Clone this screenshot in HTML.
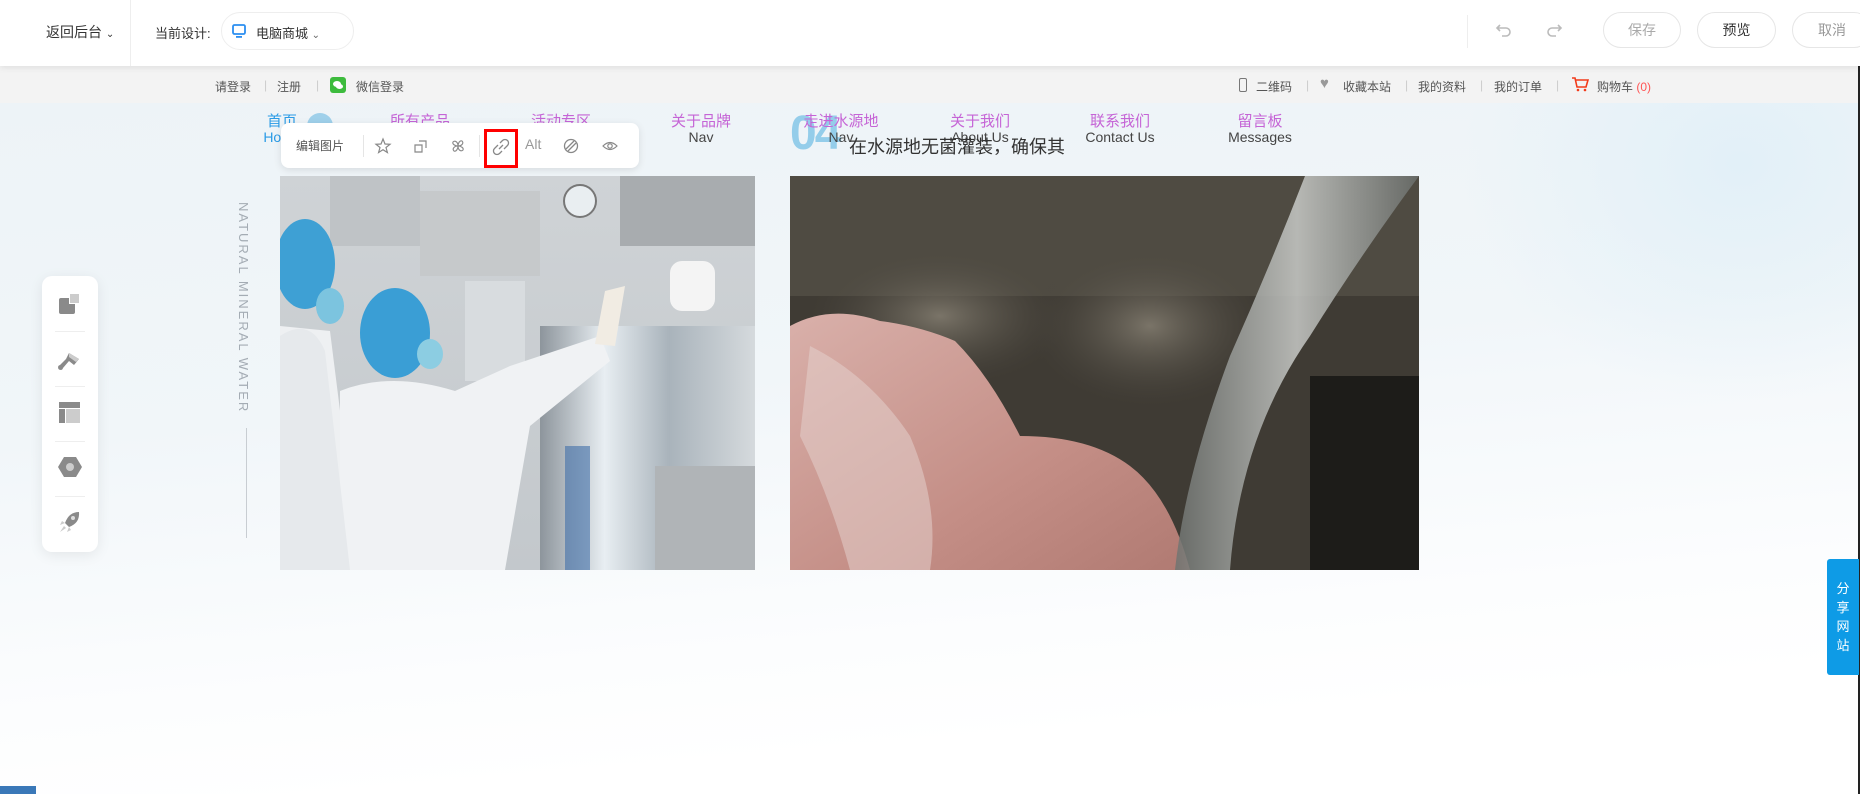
<!DOCTYPE html>
<html><head><meta charset="utf-8">
<style>
*{margin:0;padding:0;box-sizing:border-box}
body{width:1860px;height:794px;overflow:hidden;position:relative;font-family:"Liberation Sans","Noto Sans CJK SC",sans-serif;background:#fff}
.abs{position:absolute}
#top{left:0;top:0;width:1860px;height:66px;background:#fff;box-shadow:0 2px 6px rgba(0,0,0,.08);z-index:5}
.t{position:absolute;white-space:nowrap}
.btn{position:absolute;top:12px;height:36px;border:1px solid #e6e6e6;border-radius:18px;font-size:14px;text-align:center;line-height:34px}
#bar{left:0;top:66px;width:1860px;height:37px;background:#f3f3f3;font-size:12px;color:#555}
#main{left:0;top:103px;width:1860px;height:691px;background:linear-gradient(175deg,#edf3f7 0%,#f1f6f9 40%,#fcfdfe 72%,#fff 85%)}
.nav{position:absolute;text-align:center;width:120px;font-size:15px}
.nav .c{color:#c564d6;height:19px}
.nav .e{color:#444;font-size:14px}
</style></head><body>
<div id="top" class="abs">
  <div class="t" style="left:46px;top:22px;font-size:14px;color:#333">返回后台 <span style="font-size:10px">⌄</span></div>
  <div class="abs" style="left:130px;top:0;width:1px;height:66px;background:#eee"></div>
  <div class="t" style="left:155px;top:23px;font-size:13px;color:#333">当前设计:</div>
  <div class="abs" style="left:221px;top:12px;width:133px;height:38px;border:1px solid #eee;border-radius:19px"></div>
  <svg class="abs" style="left:232px;top:24px" width="14" height="14" viewBox="0 0 14 14"><rect x="1" y="1" width="12" height="9" rx="1.5" fill="none" stroke="#2b8ef0" stroke-width="1.8"/><rect x="4" y="12" width="6" height="1.8" fill="#2b8ef0"/></svg>
  <div class="t" style="left:256px;top:23px;font-size:13px;color:#333">电脑商城 <span style="font-size:10px;color:#666">⌄</span></div>
  <div class="abs" style="left:1467px;top:15px;width:1px;height:33px;background:#eee"></div>
  <svg class="abs" style="left:1495px;top:21px" width="18" height="18" viewBox="0 0 18 18"><path d="M5 4 L2 7 L5 10 M2 7 H11 A4 4 0 0 1 11 15 H7" fill="none" stroke="#bbb" stroke-width="1.6"/></svg>
  <svg class="abs" style="left:1545px;top:21px" width="18" height="18" viewBox="0 0 18 18"><path d="M13 4 L16 7 L13 10 M16 7 H7 A4 4 0 0 0 7 15 H11" fill="none" stroke="#bbb" stroke-width="1.6"/></svg>
  <div class="btn" style="left:1603px;width:78px;color:#aaa">保存</div>
  <div class="btn" style="left:1697px;width:79px;color:#333">预览</div>
  <div class="btn" style="left:1792px;width:80px;color:#999">取消</div>
</div>
<div id="bar" class="abs">
  <span class="t" style="left:215px;top:12px">请登录</span>
  <span class="t" style="left:264px;top:12px;color:#ccc">|</span>
  <span class="t" style="left:277px;top:12px">注册</span>
  <span class="t" style="left:316px;top:12px;color:#ccc">|</span>
  <div class="abs" style="left:330px;top:11px;width:16px;height:16px;background:#3dbb3d;border-radius:3px"><div style="position:absolute;left:3px;top:4px;width:8px;height:6px;background:#fff;border-radius:50%"></div><div style="position:absolute;left:6px;top:7px;width:7px;height:5px;background:#fff;border-radius:50%"></div></div>
  <span class="t" style="left:356px;top:12px">微信登录</span>
  <div class="abs" style="left:1239px;top:12px;width:8px;height:14px;border:1.5px solid #777;border-radius:2px"></div>
  <span class="t" style="left:1256px;top:12px">二维码</span>
  <span class="t" style="left:1306px;top:12px;color:#ccc">|</span>
  <span class="t" style="left:1320px;top:9px;color:#999;font-size:15px">♥</span>
  <span class="t" style="left:1343px;top:12px">收藏本站</span>
  <span class="t" style="left:1405px;top:12px;color:#ccc">|</span>
  <span class="t" style="left:1418px;top:12px">我的资料</span>
  <span class="t" style="left:1480px;top:12px;color:#ccc">|</span>
  <span class="t" style="left:1494px;top:12px">我的订单</span>
  <span class="t" style="left:1556px;top:12px;color:#ccc">|</span>
  <svg class="abs" style="left:1571px;top:10px" width="18" height="16" viewBox="0 0 18 16"><path d="M1 2 H4 L6 11 H15 L17 4 H5" fill="none" stroke="#f23a1a" stroke-width="1.6"/><circle cx="7" cy="14" r="1.3" fill="#f23a1a"/><circle cx="14" cy="14" r="1.3" fill="#f23a1a"/></svg>
  <span class="t" style="left:1597px;top:12px">购物车 <span style="color:#f55">(0)</span></span>
</div>
<div id="main" class="abs"></div>
<div class="abs" style="left:1460px;top:103px;width:400px;height:300px;background:radial-gradient(ellipse at 70% 20%,#e2f0f8 0%,rgba(230,242,249,0) 70%)"></div>
<div class="abs" style="left:1858px;top:66px;width:2px;height:728px;background:#222"></div>

<div class="abs" style="left:307px;top:113px;width:26px;height:26px;border-radius:50%;background:#9fd0ea"></div>
<div class="t" style="left:790px;top:106px;font-size:48px;font-weight:bold;color:#94cdea;letter-spacing:-2px">04</div>

<div class="nav" style="left:222px;top:110px"><div class="c" style="color:#2a9be6">首页</div><div class="e" style="color:#2a9be6">Home</div></div>
<div class="nav" style="left:360px;top:110px"><div class="c">所有产品</div><div class="e">Nav</div></div>
<div class="nav" style="left:501px;top:110px"><div class="c">活动专区</div><div class="e">Nav</div></div>
<div class="nav" style="left:641px;top:110px"><div class="c">关于品牌</div><div class="e">Nav</div></div>
<div class="nav" style="left:781px;top:110px"><div class="c">走进水源地</div><div class="e">Nav</div></div>
<div class="nav" style="left:920px;top:110px"><div class="c">关于我们</div><div class="e">About Us</div></div>
<div class="nav" style="left:1060px;top:110px"><div class="c">联系我们</div><div class="e">Contact Us</div></div>
<div class="nav" style="left:1200px;top:110px"><div class="c">留言板</div><div class="e">Messages</div></div>
<div class="t" style="left:849px;top:133px;font-size:18px;color:#333">在水源地无菌灌装，确保其</div>

<div class="abs" style="left:281px;top:123px;width:358px;height:45px;background:#fff;border-radius:8px;box-shadow:0 2px 8px rgba(0,0,0,.1)">
  <span class="t" style="left:15px;top:14px;font-size:12px;color:#555">编辑图片</span>
  <div class="abs" style="left:82px;top:12px;width:1px;height:22px;background:#e5e5e5"></div>
  <svg class="abs" style="left:93px;top:14px" width="18" height="18" viewBox="0 0 18 18"><path d="M9 2 L11 7 L16 7.3 L12 10.5 L13.4 15.5 L9 12.7 L4.6 15.5 L6 10.5 L2 7.3 L7 7 Z" fill="none" stroke="#888" stroke-width="1.2"/></svg>
  <svg class="abs" style="left:131px;top:14px" width="18" height="18" viewBox="0 0 18 18"><path d="M7 4 H14 V11 M3 8 H10 V15 H3 Z" fill="none" stroke="#888" stroke-width="1.2"/></svg>
  <svg class="abs" style="left:168px;top:14px" width="18" height="18" viewBox="0 0 18 18"><path d="M9 9 C9 5 6 3 4 5 C3 7 6 9 9 9 C13 9 15 6 13 4 C11 3 9 6 9 9 C9 13 12 15 14 13 C15 11 12 9 9 9 C5 9 3 12 5 14 C7 15 9 12 9 9" fill="none" stroke="#888" stroke-width="1.1"/></svg>
  <div class="abs" style="left:198px;top:12px;width:1px;height:22px;background:#e5e5e5"></div>
  <div class="abs" style="left:203px;top:6px;width:34px;height:39px;border:3px solid #f00"></div>
  <svg class="abs" style="left:211px;top:15px" width="18" height="18" viewBox="0 0 18 18"><path d="M8 5 L10.5 2.5 A2.5 2.5 0 0 1 15.5 7.5 L12 11 M10 13 L7.5 15.5 A2.5 2.5 0 0 1 2.5 10.5 L6 7 M7 11 L11 7" fill="none" stroke="#888" stroke-width="1.3"/></svg>
  <span class="t" style="left:244px;top:13px;font-size:14px;color:#999">Alt</span>
  <svg class="abs" style="left:281px;top:14px" width="18" height="18" viewBox="0 0 18 18"><circle cx="9" cy="9" r="6.5" fill="none" stroke="#888" stroke-width="1.3"/><path d="M4 12 L12 4 M6 14 L14 6" stroke="#888" stroke-width="1.3"/></svg>
  <svg class="abs" style="left:320px;top:14px" width="18" height="18" viewBox="0 0 18 18"><path d="M2 9 Q9 2 16 9 Q9 16 2 9 Z" fill="none" stroke="#888" stroke-width="1.2"/><circle cx="9" cy="9" r="2.2" fill="none" stroke="#888" stroke-width="1.2"/></svg>
</div>

<svg class="abs" style="left:280px;top:176px" width="475" height="394" viewBox="0 0 475 394">
<defs><linearGradient id="bg1" x1="0" y1="0" x2="0" y2="1"><stop offset="0" stop-color="#cfd3d6"/><stop offset="1" stop-color="#c3c8cc"/></linearGradient>
<linearGradient id="tank" x1="0" y1="0" x2="1" y2="0"><stop offset="0" stop-color="#8d959c"/><stop offset=".3" stop-color="#e8eef2"/><stop offset=".6" stop-color="#a9b3bb"/><stop offset="1" stop-color="#d5dadd"/></linearGradient></defs>
<rect width="475" height="394" fill="url(#bg1)"/>
<rect x="50" y="0" width="90" height="70" fill="#bfc3c6"/>
<rect x="140" y="15" width="120" height="85" fill="#c6c9cb"/>
<rect x="340" y="0" width="135" height="70" fill="#a8acaf"/>
<rect x="185" y="105" width="60" height="100" fill="#d8dcdf"/>
<rect x="260" y="150" width="215" height="244" fill="url(#tank)"/>
<rect x="285" y="270" width="25" height="124" fill="#3f6ea8" opacity=".6"/>
<rect x="375" y="290" width="100" height="104" fill="#b0b4b7"/>
<rect x="390" y="85" width="45" height="50" rx="12" fill="#f4f4f4"/>
<circle cx="300" cy="25" r="16" fill="#e9eef1" stroke="#777" stroke-width="2"/>
<path d="M0 150 L50 155 L80 394 L0 394 Z" fill="#eef0f2"/>
<path d="M60 215 Q110 195 175 215 L230 190 L320 160 L330 185 L250 250 L225 394 L60 394 Z" fill="#f0f2f4"/>
<path d="M0 160 Q30 140 45 175 L70 394 L0 394Z" fill="#e6e9ec"/>
<ellipse cx="25" cy="88" rx="30" ry="45" fill="#3ea0d4"/>
<ellipse cx="115" cy="157" rx="35" ry="45" fill="#3a9ed5"/>
<ellipse cx="50" cy="130" rx="14" ry="18" fill="#7cc4df"/>
<ellipse cx="150" cy="178" rx="13" ry="15" fill="#8ccde2"/>
<path d="M325 115 L345 110 L335 170 L315 168 Z" fill="#f1ece3"/>
</svg>

<svg class="abs" style="left:790px;top:176px" width="629" height="394" viewBox="0 0 629 394">
<defs><radialGradient id="blob" cx=".5" cy=".5" r=".5"><stop offset="0" stop-color="#7a7468"/><stop offset="1" stop-color="#4a463e" stop-opacity="0"/></radialGradient>
<linearGradient id="hand" x1="0" y1="0" x2="1" y2="1"><stop offset="0" stop-color="#d9b0aa"/><stop offset=".6" stop-color="#c48e86"/><stop offset="1" stop-color="#b07a72"/></linearGradient>
<linearGradient id="wat" x1="0" y1="0" x2="1" y2="0"><stop offset="0" stop-color="#6f7370"/><stop offset=".5" stop-color="#c9cbc8"/><stop offset="1" stop-color="#6a6e6b"/></linearGradient></defs>
<rect width="629" height="394" fill="#3f3b34"/>
<rect x="0" y="0" width="629" height="120" fill="#5a564d" opacity=".6"/>
<ellipse cx="150" cy="140" rx="130" ry="70" fill="url(#blob)"/>
<ellipse cx="360" cy="150" rx="120" ry="80" fill="url(#blob)"/>
<rect x="520" y="200" width="109" height="194" fill="#1d1c19"/>
<path d="M0 150 Q40 128 90 145 Q130 150 165 165 Q200 200 230 260 Q300 260 340 290 Q380 320 400 394 L0 394 Z" fill="url(#hand)"/>
<path d="M20 170 Q80 200 120 260 Q150 330 140 394 L60 394 Q40 320 10 260Z" fill="#e4cfcc" opacity=".55"/>
<path d="M515 0 L629 0 Q570 80 520 160 Q450 260 440 394 L385 394 Q395 300 440 180 Q480 90 515 0Z" fill="url(#wat)" opacity=".85"/>
</svg>

<div class="t" style="left:236px;top:202px;writing-mode:vertical-rl;font-size:13px;letter-spacing:2px;color:#a4acb4">NATURAL MINERAL WATER</div>
<div class="abs" style="left:246px;top:428px;width:1px;height:110px;background:#c8cdd2"></div>

<div class="abs" style="left:42px;top:276px;width:56px;height:276px;background:#fff;border-radius:10px;box-shadow:0 3px 14px rgba(0,0,0,.08)">
  <div class="abs" style="left:17px;top:22px;width:16px;height:16px;background:#8a8a8a;border-radius:2px"></div>
  <div class="abs" style="left:27px;top:17px;width:11px;height:11px;background:#ccc;border:1px solid #fff"></div>
  <div class="abs" style="left:13px;top:55px;width:30px;height:1px;background:#eee"></div>
  <svg class="abs" style="left:15px;top:73px" width="26" height="26" viewBox="0 0 26 26"><path d="M12 4 L22 10 L17 16 L12 12 L6 19 A2.5 2.5 0 1 1 3 16 L9 10 Z" fill="#8a8a8a"/><path d="M12 4 L22 10 L19 13 L12 8Z" fill="#ccc"/></svg>
  <div class="abs" style="left:13px;top:110px;width:30px;height:1px;background:#eee"></div>
  <div class="abs" style="left:17px;top:126px;width:21px;height:6px;background:#8a8a8a"></div>
  <div class="abs" style="left:17px;top:133px;width:6px;height:14px;background:#8a8a8a"></div>
  <div class="abs" style="left:24px;top:133px;width:14px;height:14px;background:#ccc"></div>
  <div class="abs" style="left:13px;top:165px;width:30px;height:1px;background:#eee"></div>
  <svg class="abs" style="left:15px;top:178px" width="26" height="26" viewBox="0 0 26 26"><path d="M7 3 H19 L25 13 L19 23 H7 L1 13 Z" fill="#8a8a8a"/><circle cx="13" cy="13" r="4" fill="#ccc"/></svg>
  <div class="abs" style="left:13px;top:220px;width:30px;height:1px;background:#eee"></div>
  <svg class="abs" style="left:15px;top:233px" width="26" height="26" viewBox="0 0 26 26"><path d="M22 3 Q12 3 8 14 L12 18 Q23 14 22 3Z" fill="#8a8a8a"/><path d="M8 14 L3 16 L5 12Z M12 18 L10 23 L14 21Z M7 17 L3 23 L9 19Z" fill="#ccc"/><circle cx="16" cy="9" r="2" fill="#ddd"/></svg>
</div>

<div class="abs" style="left:1827px;top:559px;width:32px;height:116px;background:#0e9be6;border-radius:3px 0 0 3px;color:#fff;font-size:13px;text-align:center;line-height:19px;padding-top:20px">分<br>享<br>网<br>站</div>
<div class="abs" style="left:0;top:786px;width:36px;height:8px;background:#3a78b8"></div>
</body></html>
